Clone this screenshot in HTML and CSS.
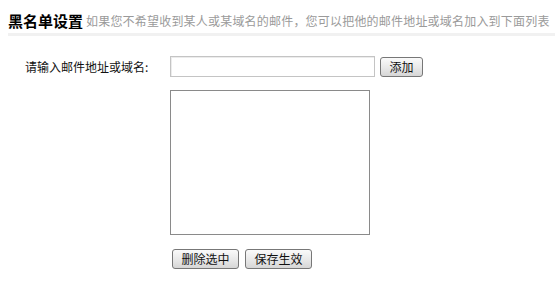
FILE: index.html
```html
<!DOCTYPE html>
<html lang="zh-CN">
<head>
<meta charset="utf-8">
<title>黑名单设置</title>
<link rel="stylesheet" href="styles.css">
</head>
<body>
<div class="header">
  <h1 class="title">黑名单设置</h1>
  <span class="desc">如果您不希望收到某人或某域名的邮件，您可以把他的邮件地址或域名加入到下面列表</span>
</div>
<form class="form">
  <label class="label" for="addr">请输入邮件地址或域名:</label>
  <div class="field">
    <input id="addr" class="input" type="text">
    <button type="button" class="btn btn-add">添加</button>
  </div>
  <div class="spacer"></div>
  <div class="field">
    <select class="list" multiple></select>
  </div>
  <div class="spacer"></div>
  <div class="field actions">
    <button type="button" class="btn">删除选中</button>
    <button type="button" class="btn">保存生效</button>
  </div>
</form>
</body>
</html>
```

FILE: styles.css
```css
html, body {
  margin: 0;
  padding: 0;
  background: #fff;
}
body {
  font-family: "Noto Sans CJK SC", "Noto Sans", sans-serif;
  font-size: 12px;
  color: #222;
}
.header {
  margin-left: 8px;
  padding-top: 9px;
  height: 24px;
  border-bottom: 3px solid #f1f1f1;
  display: flex;
  align-items: center;
  white-space: nowrap;
}
.title {
  margin: 0;
  font-size: 15px;
  font-weight: bold;
  color: #000;
  line-height: 20px;
}
.desc {
  margin-left: 3px;
  font-size: 12px;
  letter-spacing: 0.2px;
  color: #9a9a9a;
  line-height: 20px;
}
.form {
  margin-top: 19px;
  display: grid;
  grid-template-columns: 170px 1fr;
  row-gap: 0;
}
.label {
  padding-left: 25px;
  display: flex;
  align-items: center;
  height: 22px;
  color: #111;
  font-size: 12px;
}
.field {
  display: flex;
  align-items: center;
  gap: 5px;
}
.spacer {
  height: 0;
}
.input {
  box-sizing: border-box;
  width: 205px;
  height: 21px;
  margin: 0;
  border: 1px solid #c4c4c4;
  border-radius: 0;
  box-shadow: inset 1px 1px 0 #ececec;
  font-size: 12px;
  padding: 0 3px;
  outline: none;
}
.btn {
  box-sizing: border-box;
  height: 20px;
  margin: 0;
  padding: 0 8px;
  font-family: "Noto Sans CJK SC", sans-serif;
  font-size: 12px;
  line-height: 18px;
  color: #111;
  border: 1px solid #777;
  border-radius: 3px;
  background: linear-gradient(#fafafa, #e8e8e8 55%, #d6d6d6);
  cursor: pointer;
}
.btn-add {
  width: 43px;
  padding: 0;
  margin-top: 2px;
}
.list {
  box-sizing: border-box;
  margin-top: 13px;
  width: 200px;
  height: 145px;
  border: 1px solid #8a8a8a;
  border-radius: 0;
  background: #fff;
  appearance: none;
}
.actions {
  margin-top: 14px;
  padding-left: 2px;
  gap: 6px;
}
.actions .btn {
  width: 67px;
  padding: 0;
}
```
